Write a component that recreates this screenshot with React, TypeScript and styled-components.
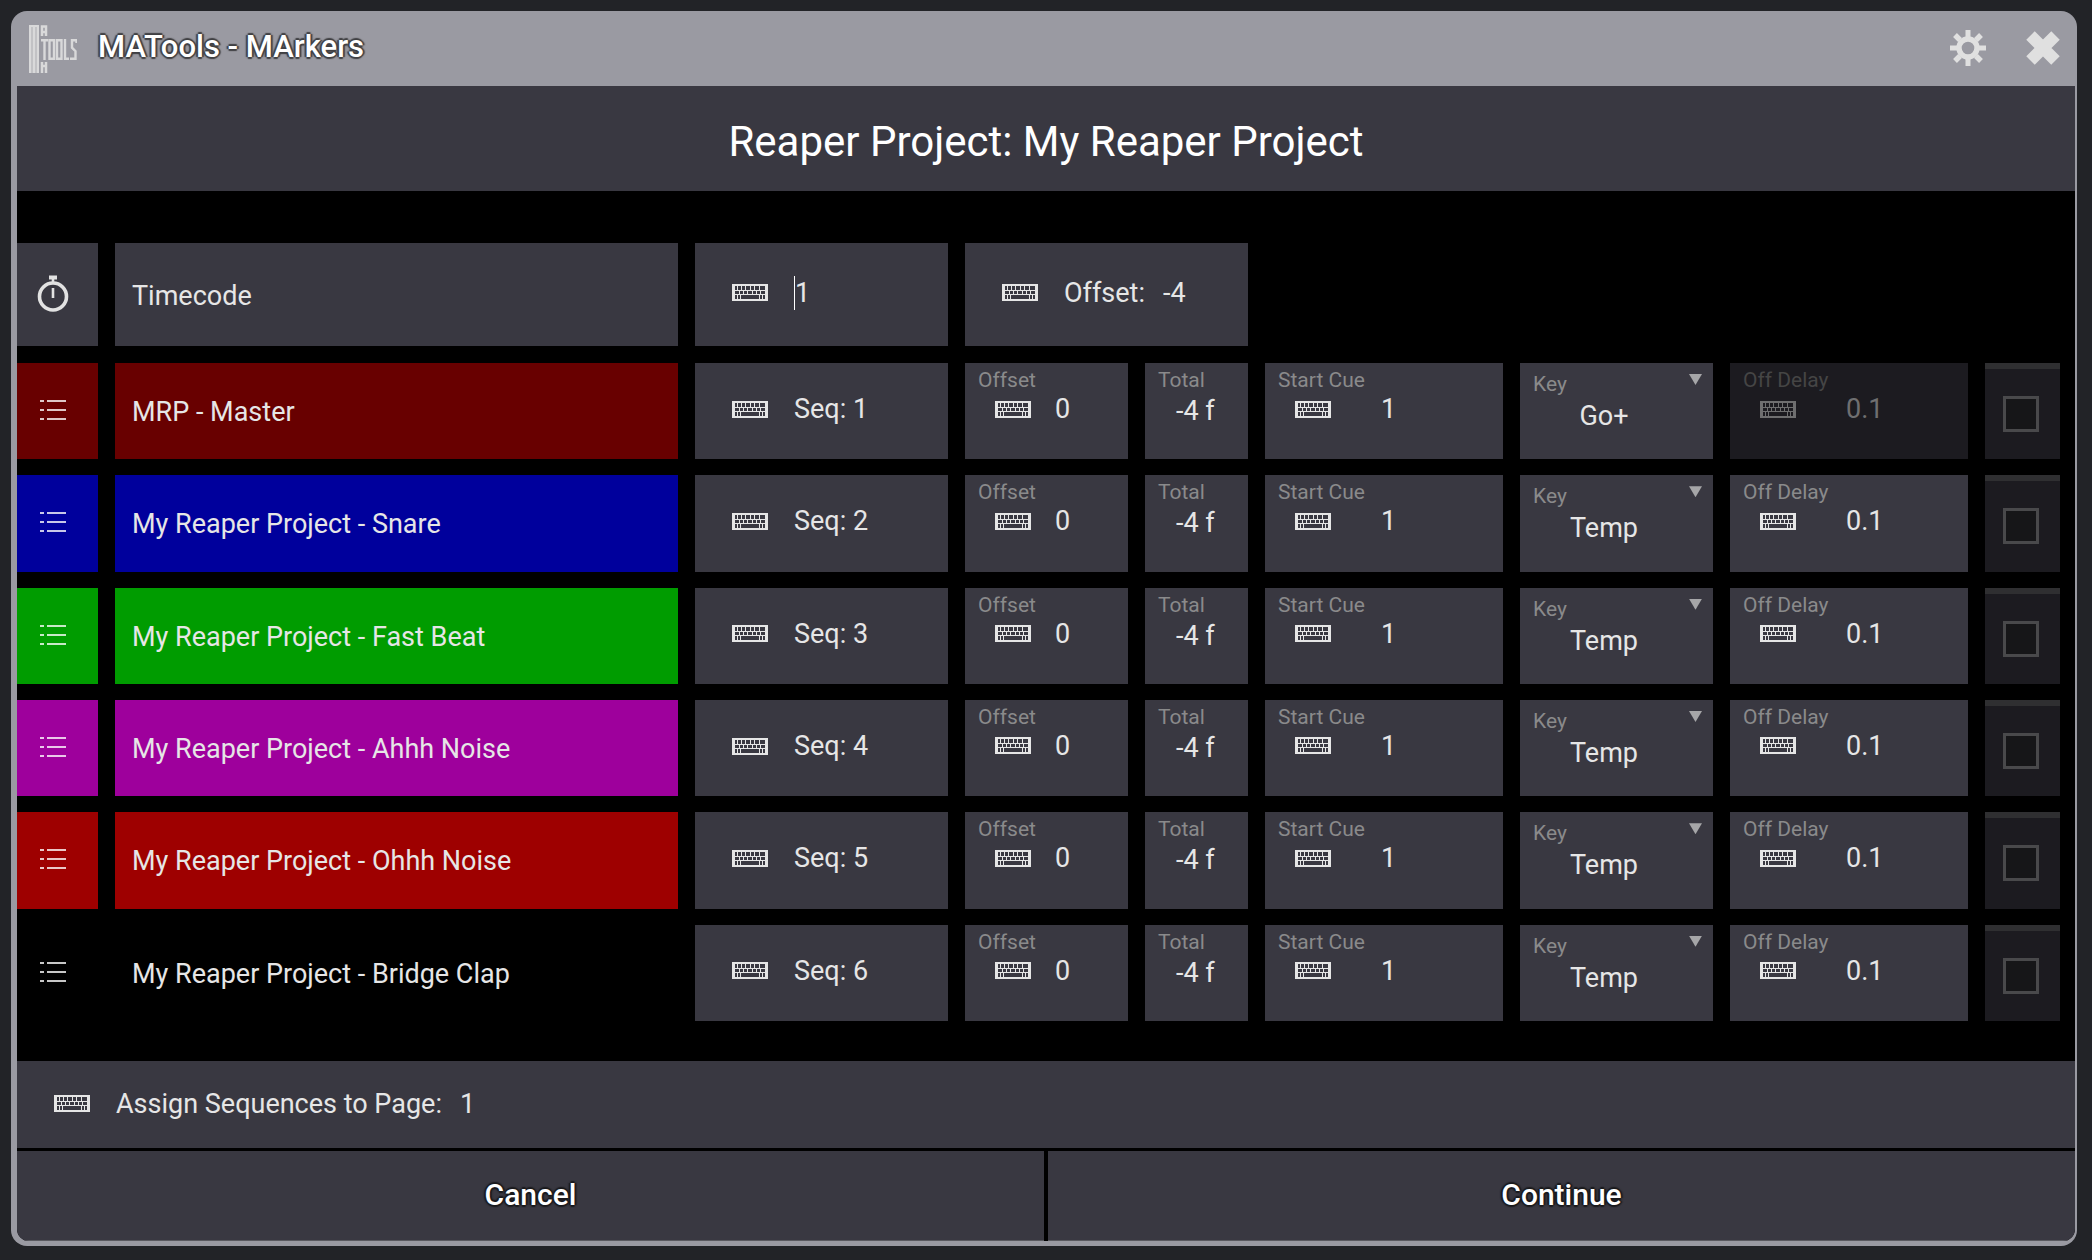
import React from 'react';
import styled, { createGlobalStyle, css } from 'styled-components';

const GlobalStyle = createGlobalStyle`
  * { box-sizing: border-box; }
  body {
    margin: 0;
    background: #222327;
    color: #e6e6e6;
    font-family: Roboto, "Liberation Sans", sans-serif;
    font-size: 27px;
    line-height: 32px;
  }
  button, input, select { font: inherit; color: inherit; }
`;

const outline = css<{ $edge?: string }>`
  text-shadow:
    2px 0 1px ${(p) => p.$edge ?? '#1b1b1e'},
    -2px 0 1px ${(p) => p.$edge ?? '#1b1b1e'},
    0 2px 1px ${(p) => p.$edge ?? '#1b1b1e'},
    0 -2px 1px ${(p) => p.$edge ?? '#1b1b1e'},
    0 0 3px ${(p) => p.$edge ?? '#1b1b1e'};
`;

const Page = styled.div`
  min-height: 100vh;
  padding: 11px 15px 14px 11px;
  display: flex;
`;

const Dialog = styled.main`
  flex: 1;
  display: flex;
  flex-direction: column;
  padding: 0 2px 5px 6px;
  border-radius: 16px;
  background: #9a9aa2;
  overflow: hidden;
`;

const TitleBar = styled.header`
  height: 75px;
  display: flex;
  align-items: center;
  padding: 0 14px 0 12px;
  gap: 21px;
`;

const WindowTitle = styled.h1<{ $edge?: string }>`
  flex: 1;
  margin: 0 0 4px;
  font-size: 31px;
  font-weight: 500;
  color: #fff;
  ${outline}
`;

const IconButton = styled.button`
  width: 36px;
  height: 36px;
  margin: 0 0 2px 18px;
  padding: 0;
  border: 0;
  background: none;
  color: #e0e0e0;
  svg { display: block; }
`;

const ProjectHeader = styled.h2`
  margin: 0;
  height: 105px;
  padding-top: 6px;
  display: flex;
  align-items: center;
  justify-content: center;
  background: #393841;
  color: #fff;
  font-size: 42px;
  font-weight: 400;
`;

const Rows = styled.section`
  flex: 1;
  display: flex;
  flex-direction: column;
  gap: 17px;
  padding: 52px 15px 40px 0;
  background: #000;
`;

const TrackList = styled.div`
  flex: 1;
  display: flex;
  flex-direction: column;
  gap: 16px;
`;

const Row = styled.div<{ $tall?: boolean }>`
  flex: ${(p) => (p.$tall ? '0 0 103px' : '1 0 80px')};
  display: grid;
  grid-template-columns: 81fr 563fr 253fr 163fr 103fr 238fr 193fr 238fr 75fr;
  column-gap: 17px;
`;

const Cell = styled.div<{ $color?: string }>`
  display: flex;
  min-width: 0;
  background: ${(p) => p.$color ?? '#393841'};
`;

const IconCell = styled(Cell)`
  align-items: center;
  justify-content: center;
  padding: 0 9px 2px 0;
`;

const NameCell = styled(Cell)`
  align-items: center;
  padding: 2px 17px 0;
  white-space: nowrap;
`;

const InlineField = styled(Cell)<{ $wide?: boolean }>`
  align-items: center;
  gap: 26px;
  padding: 0 16px 4px 37px;
  grid-column: ${(p) => (p.$wide ? 'span 2' : 'auto')};
`;

const StackField = styled(Cell)<{ $disabled?: boolean }>`
  flex-direction: column;
  padding: 5px 13px 0;
  color: ${(p) => (p.$disabled ? '#6f6f70' : '#e6e6e6')};
  background: ${(p) => (p.$disabled ? '#1c1b20' : '#393841')};
`;

const Caption = styled.label<{ $dim?: boolean }>`
  font-size: 21px;
  line-height: 25px;
  color: ${(p) => (p.$dim ? '#454545' : '#8a8a8b')};
  white-space: nowrap;
`;

const ValueLine = styled.div<{ $gap: number }>`
  display: flex;
  align-items: center;
  gap: ${(p) => p.$gap}px;
  padding-left: 17px;
`;

const TextInput = styled.input`
  min-width: 0;
  width: 100%;
  height: 32px;
  padding: 0;
  border: 0;
  outline: 0;
  background: none;
`;

const CaretInput = styled(TextInput)`
  height: 34px;
  border-left: 1px solid #fff;
`;

const Total = styled.output`
  padding: 2px 0 0 18px;
  white-space: nowrap;
`;

const Pair = styled.div`
  flex: 1;
  display: flex;
  gap: 18px;
  min-width: 0;
  white-space: nowrap;
`;

const KeyField = styled(Cell)`
  flex-direction: column;
  padding: 9px 11px 0 13px;
`;

const KeyTop = styled.div`
  display: flex;
  justify-content: space-between;
`;

const Arrow = styled.span`
  width: 13px;
  height: 11px;
  margin-top: 2px;
  background: #a6a6a8;
  clip-path: polygon(0 0, 100% 0, 50% 100%);
`;

const KeySelect = styled.select`
  width: 100%;
  height: 32px;
  margin-top: 3px;
  padding: 0 27px 0 0;
  appearance: none;
  border: 0;
  outline: 0;
  background: none;
  text-align: center;
  text-align-last: center;
  option { color: #000; }
`;

const CheckCell = styled.label`
  display: flex;
  align-items: center;
  justify-content: center;
  border-top: 6px solid #2f2f31;
  background: #1c1b20;
`;

const CheckBox = styled.input`
  appearance: none;
  width: 36px;
  height: 36px;
  margin: 0 3px 0 0;
  border: 3px solid #49494b;
  background: #161618;
  &:checked { background: #e0e0e0; }
`;

const PageField = styled.div`
  height: 87px;
  display: flex;
  align-items: center;
  gap: 26px;
  padding: 0 37px 2px;
  background: #393841;
  white-space: nowrap;
`;

const Actions = styled.footer`
  display: grid;
  grid-template-columns: 1fr 1fr;
  gap: 4px;
  padding-top: 3px;
  background: #000;
  border-radius: 0 0 12px 12px;
  overflow: hidden;
`;

const ActionButton = styled.button<{ $edge?: string }>`
  height: 90px;
  padding: 0 0 2px;
  border: 0;
  border-bottom: 1px solid #5a5a60;
  background: #393841;
  color: #fff;
  font-size: 30px;
  font-weight: 500;
  ${outline}
`;

const KeyboardSvg = styled.svg`
  flex: none;
  display: block;
`;

const Keyboard = () => (
  <KeyboardSvg width="36" height="17" viewBox="0 0 36 17" shapeRendering="crispEdges" aria-hidden="true">
    <path
      fill="currentColor"
      fillRule="evenodd"
      d="M0 0H36V17H0Z M3 2V6H5V2Z M6 2V6H9V2Z M10 2V6H13V2Z M14 2V6H18V2Z M19 2V6H22V2Z M23 2V6H27V2Z M28 2V6H33V2Z M3 7V10H7V7Z M8 7V10H11V7Z M12 7V10H15V7Z M16 7V10H20V7Z M21 7V10H24V7Z M25 7V10H28V7Z M29 7V10H33V7Z M3 11V15H5V11Z M6 11V15H8V11Z M9 11V15H27V11Z M28 11V15H30V11Z M31 11V15H33V11Z"
    />
  </KeyboardSvg>
);

const ListIcon = () => (
  <svg width="26" height="22" viewBox="0 0 26 22" fill="#fff" fillOpacity="0.78" aria-hidden="true">
    <path d="M0 1h4v2H0z M7 1h19v2H7z M0 10h4v2H0z M7 10h19v2H7z M0 19h4v2H0z M7 19h19v2H7z" />
  </svg>
);

const Stopwatch = () => (
  <svg width="32" height="37" viewBox="0 0 32 37" fill="none" stroke="#e2e2e2" aria-hidden="true">
    <circle cx="16" cy="21.500" r="13.500" strokeWidth="3.6" />
    <path d="M12 2.500h8" strokeWidth="4" />
    <path d="M16 4v5M16 13v10" strokeWidth="2.6" />
  </svg>
);

const Gear = () => (
  <svg width="36" height="36" viewBox="-18 -18 36 36" fill="none" stroke="currentColor" aria-hidden="true">
    <circle r="9" strokeWidth="5.4" />
    <path d="M0-18V-9M0 9V18M-18 0H-9M9 0H18" strokeWidth="5" />
    <path d="M-13-13L-8-8M13-13L8-8M-13 13L-8 8M13 13L8 8" strokeWidth="5.4" />
  </svg>
);

const Cross = () => (
  <svg width="36" height="36" viewBox="-18 -18 36 36" stroke="currentColor" strokeWidth="12" aria-hidden="true">
    <path d="M-12.5-12.5L12.5 12.5M12.5-12.5L-12.5 12.5" />
  </svg>
);

const Logo = () => (
  <svg width="48" height="48" viewBox="0 0 48 48" fill="none" stroke="#d9d9da" strokeWidth="3" aria-hidden="true">
    <path d="M0 0H10V48H0Z" fill="#c2c2c5" stroke="none" />
    <path d="M1 48V1H9V48M5 1V48" strokeWidth="2" />
    <path d="M13 11V1.500H17V11M13 7H17M13 37V48M17 37V48M13 41H17" strokeWidth="2.500" />
    <path
      d="M12 15.200h7M15.500 15V35M20.500 15.200h4.500v18.600h-4.500zM28 15.200h4.500v18.600h-4.500zM36 14v19.800h4M47.500 18v-2.800h-4.500v7.500l3.500 3.500v7.600H41"
      strokeWidth="2.400"
    />
  </svg>
);

type Track = { name: string; color: string; seq: number; action: string; offDisabled?: boolean };

const tracks: Track[] = [
  { name: 'MRP - Master', color: '#680000', seq: 1, action: 'Go+', offDisabled: true },
  { name: 'My Reaper Project - Snare', color: '#00009c', seq: 2, action: 'Temp' },
  { name: 'My Reaper Project - Fast Beat', color: '#009c00', seq: 3, action: 'Temp' },
  { name: 'My Reaper Project - Ahhh Noise', color: '#9e009c', seq: 4, action: 'Temp' },
  { name: 'My Reaper Project - Ohhh Noise', color: '#9e0000', seq: 5, action: 'Temp' },
  { name: 'My Reaper Project - Bridge Clap', color: '#000', seq: 6, action: 'Temp' },
];

type NumberFieldProps = { id: string; label: string; value: string; gap: number; disabled?: boolean };

const NumberField = ({ id, label, value, gap, disabled }: NumberFieldProps) => (
  <StackField $disabled={disabled}>
    <Caption htmlFor={id} $dim={disabled}>{label}</Caption>
    <ValueLine $gap={gap}>
      <Keyboard />
      <TextInput id={id} defaultValue={value} disabled={disabled} />
    </ValueLine>
  </StackField>
);

const TrackRow = ({ name, color, seq, action, offDisabled }: Track) => (
  <Row>
    <IconCell $color={color}><ListIcon /></IconCell>
    <NameCell $color={color}>{name}</NameCell>
    <InlineField>
      <Keyboard />
      <TextInput aria-label={`${name} sequence`} defaultValue={`Seq: ${seq}`} />
    </InlineField>
    <NumberField id={`offset-${seq}`} label="Offset" value="0" gap={24} />
    <StackField>
      <Caption htmlFor={`total-${seq}`}>Total</Caption>
      <Total id={`total-${seq}`}>-4 f</Total>
    </StackField>
    <NumberField id={`cue-${seq}`} label="Start Cue" value="1" gap={50} />
    <KeyField>
      <KeyTop>
        <Caption htmlFor={`key-${seq}`}>Key</Caption>
        <Arrow />
      </KeyTop>
      <KeySelect id={`key-${seq}`} defaultValue={action}>
        <option>Go+</option>
        <option>Temp</option>
      </KeySelect>
    </KeyField>
    <NumberField id={`delay-${seq}`} label="Off Delay" value="0.1" gap={50} disabled={offDisabled} />
    <CheckCell>
      <CheckBox type="checkbox" aria-label={`Select ${name}`} />
    </CheckCell>
  </Row>
);

export default function App() {
  return (
    <>
      <GlobalStyle />
      <Page>
        <Dialog>
          <TitleBar>
            <Logo />
            <WindowTitle $edge="#414144">MATools - MArkers</WindowTitle>
            <IconButton aria-label="Settings"><Gear /></IconButton>
            <IconButton aria-label="Close"><Cross /></IconButton>
          </TitleBar>
          <ProjectHeader>Reaper Project: My Reaper Project</ProjectHeader>
          <Rows>
            <Row $tall>
              <IconCell><Stopwatch /></IconCell>
              <NameCell>Timecode</NameCell>
              <InlineField>
                <Keyboard />
                <CaretInput aria-label="Timecode number" defaultValue="1" />
              </InlineField>
              <InlineField $wide>
                <Keyboard />
                <Pair>
                  <label htmlFor="timecode-offset">Offset:</label>
                  <TextInput id="timecode-offset" defaultValue="-4" />
                </Pair>
              </InlineField>
            </Row>
            <TrackList>
              {tracks.map((t) => (
                <TrackRow key={t.seq} {...t} />
              ))}
            </TrackList>
          </Rows>
          <PageField>
            <Keyboard />
            <Pair>
              <label htmlFor="page-number">Assign Sequences to Page:</label>
              <TextInput id="page-number" defaultValue="1" />
            </Pair>
          </PageField>
          <Actions>
            <ActionButton>Cancel</ActionButton>
            <ActionButton>Continue</ActionButton>
          </Actions>
        </Dialog>
      </Page>
    </>
  );
}
